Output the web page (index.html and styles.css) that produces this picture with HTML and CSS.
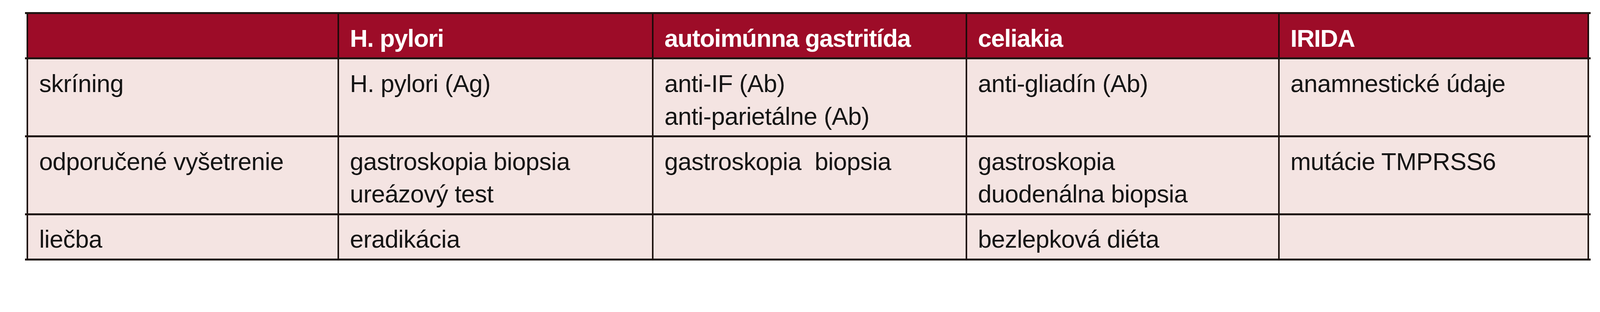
FILE: index.html
```html
<!DOCTYPE html>
<html lang="sk">
<head>
<meta charset="utf-8">
<title>Tabuľka</title>
<link rel="stylesheet" href="styles.css">
</head>
<body>
<div class="table">
  <div class="row head">
    <div class="cell"></div>
    <div class="cell">H. pylori</div>
    <div class="cell">autoimúnna gastritída</div>
    <div class="cell">celiakia</div>
    <div class="cell">IRIDA</div>
  </div>
  <div class="row">
    <div class="cell">skríning</div>
    <div class="cell">H. pylori (Ag)</div>
    <div class="cell">anti-IF (Ab)<br>anti-parietálne (Ab)</div>
    <div class="cell">anti-gliadín (Ab)</div>
    <div class="cell">anamnestické údaje</div>
  </div>
  <div class="row">
    <div class="cell">odporučené vyšetrenie</div>
    <div class="cell">gastroskopia biopsia<br>ureázový test</div>
    <div class="cell">gastroskopia&nbsp; biopsia</div>
    <div class="cell">gastroskopia<br>duodenálna biopsia</div>
    <div class="cell">mutácie TMPRSS6</div>
  </div>
  <div class="row last">
    <div class="cell">liečba</div>
    <div class="cell">eradikácia</div>
    <div class="cell"></div>
    <div class="cell">bezlepková diéta</div>
    <div class="cell"></div>
  </div>
</div>
</body>
</html>
```

FILE: styles.css
```css
:root {
  --u: calc(100vw / 4685);
  --line: #1f1512;
}

html, body {
  margin: 0;
  padding: 0;
  background: #ffffff;
  overflow: hidden;
}

body {
  padding: calc(36 * var(--u)) 0 0 calc(73 * var(--u));
  font-family: "Liberation Sans", Arial, sans-serif;
  font-size: calc(72 * var(--u));
  line-height: calc(96 * var(--u));
  letter-spacing: calc(-0.6 * var(--u));
  color: #141414;
}

.table {
  width: calc(4585 * var(--u));
}

.row {
  display: grid;
  grid-template-columns:
    calc(910 * var(--u))
    calc(921 * var(--u))
    calc(918 * var(--u))
    calc(915 * var(--u))
    calc(911 * var(--u));
  padding: 0 calc(5 * var(--u));
  border-top: calc(6 * var(--u)) solid var(--line);
}

.row.last {
  border-bottom: calc(6 * var(--u)) solid var(--line);
}

.cell {
  background: #f4e4e2;
  border-left: calc(5 * var(--u)) solid var(--line);
  padding: calc(23 * var(--u)) calc(10 * var(--u)) calc(8 * var(--u)) calc(32 * var(--u));
  white-space: nowrap;
}

.cell:last-child {
  border-right: calc(5 * var(--u)) solid var(--line);
}

.head .cell {
  background: #9d0c28;
  color: #ffffff;
  font-weight: bold;
  letter-spacing: calc(-1.5 * var(--u));
  border-left-color: #1e0a0a;
}

.head .cell:last-child {
  border-right-color: #1e0a0a;
}
```
